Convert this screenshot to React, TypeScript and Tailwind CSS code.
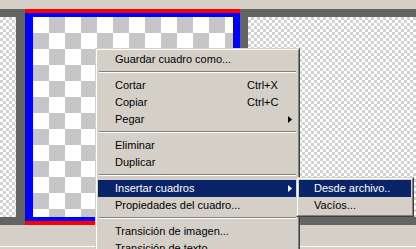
const bigChecker =
	"bg-[conic-gradient(#c6c6c6_25%,#ffffff_0_50%,#c6c6c6_0_75%,#ffffff_0)] bg-[length:32px_32px]";
const smallChecker =
	"bg-[conic-gradient(#d2d2d2_25%,#ffffff_0_50%,#d2d2d2_0_75%,#ffffff_0)] bg-[length:6px_6px]";

type Item =
	| { sep: true }
	| { label: string; shortcut?: string; arrow?: boolean; active?: boolean };

const menuItems: Item[] = [
	{ label: "Guardar cuadro como..." },
	{ sep: true },
	{ label: "Cortar", shortcut: "Ctrl+X" },
	{ label: "Copiar", shortcut: "Ctrl+C" },
	{ label: "Pegar", arrow: true },
	{ sep: true },
	{ label: "Eliminar" },
	{ label: "Duplicar" },
	{ sep: true },
	{ label: "Insertar cuadros", arrow: true, active: true },
	{ label: "Propiedades del cuadro..." },
	{ sep: true },
	{ label: "Transición de imagen..." },
	{ label: "Transición de texto..." },
	{ label: "Duración..." },
];

const Arrow = ({ color }: { color: string }) => (
	<svg width="4" height="7" viewBox="0 0 4 7" className="block">
		<path d="M0 0 L4 3.5 L0 7 Z" fill={color} />
	</svg>
);

const Separator = () => (
	<div className="h-[9px] pt-[3px] px-[1px]">
		<div className="h-[1px] bg-[#808080]" />
		<div className="h-[1px] bg-white" />
	</div>
);

const MenuBox = ({ className, children }: { className: string; children: React.ReactNode }) => (
	<div
		className={`absolute border border-t-[#d4d0c8] border-l-[#d4d0c8] border-r-[#404040] border-b-[#404040] bg-[#d4d0c8] ${className}`}
	>
		<div className="border border-t-white border-l-white border-r-[#808080] border-b-[#808080] p-[1px]">
			{children}
		</div>
	</div>
);

export default function App() {
	return (
		<div
			className="relative w-[416px] h-[249px] overflow-hidden bg-[#646464] text-[11px] text-black"
			style={{ fontFamily: '"Liberation Sans", Arial, sans-serif' }}
		>
			<div className="h-[9px] bg-[#d4d0c8]" />

			{/* filmstrip */}
			<div className="flex items-start h-[216px]">
				<div className={`w-[16px] h-[200px] mt-[8px] ${smallChecker}`} />
				<div className="ml-[9px] w-[215px] border-y-4 border-[#ff0000]">
					<div className="border-l-8 border-r-[7px] border-y-4 border-[#0000ff]">
						<div className={`w-[200px] h-[200px] ${bigChecker}`} />
					</div>
				</div>
				<div className={`ml-[8px] flex-1 h-[200px] mt-[8px] ${smallChecker}`} />
			</div>

			<div className="h-[24px] bg-[#d4d0c8] pt-[21px]">
				<div className="h-[1px] bg-white" />
			</div>

			{/* context menu */}
			<MenuBox className="left-[95px] top-[48px] w-[205px]">
				{menuItems.map((item, i) =>
					"sep" in item ? (
						<Separator key={i} />
					) : (
						<div
							key={i}
							className={`flex items-center h-[17px] leading-[17px] ${
								item.active ? "bg-[#0a246a] text-white" : ""
							}`}
						>
							<span className="pl-[17px] w-[149px] whitespace-nowrap">{item.label}</span>
							<span className="flex-1 whitespace-nowrap">{item.shortcut}</span>
							{item.arrow && (
								<span className="pr-[5px]">
									<Arrow color={item.active ? "#ffffff" : "#000000"} />
								</span>
							)}
						</div>
					)
				)}
			</MenuBox>

			{/* submenu */}
			<MenuBox className="left-[296px] top-[177px] w-[118px]">
				<div className="h-[17px] leading-[17px] pl-[15px] bg-[#0a246a] text-white whitespace-nowrap">
					Desde archivo..
				</div>
				<div className="h-[17px] leading-[17px] pl-[15px] whitespace-nowrap">Vacíos...</div>
			</MenuBox>
		</div>
	);
}
